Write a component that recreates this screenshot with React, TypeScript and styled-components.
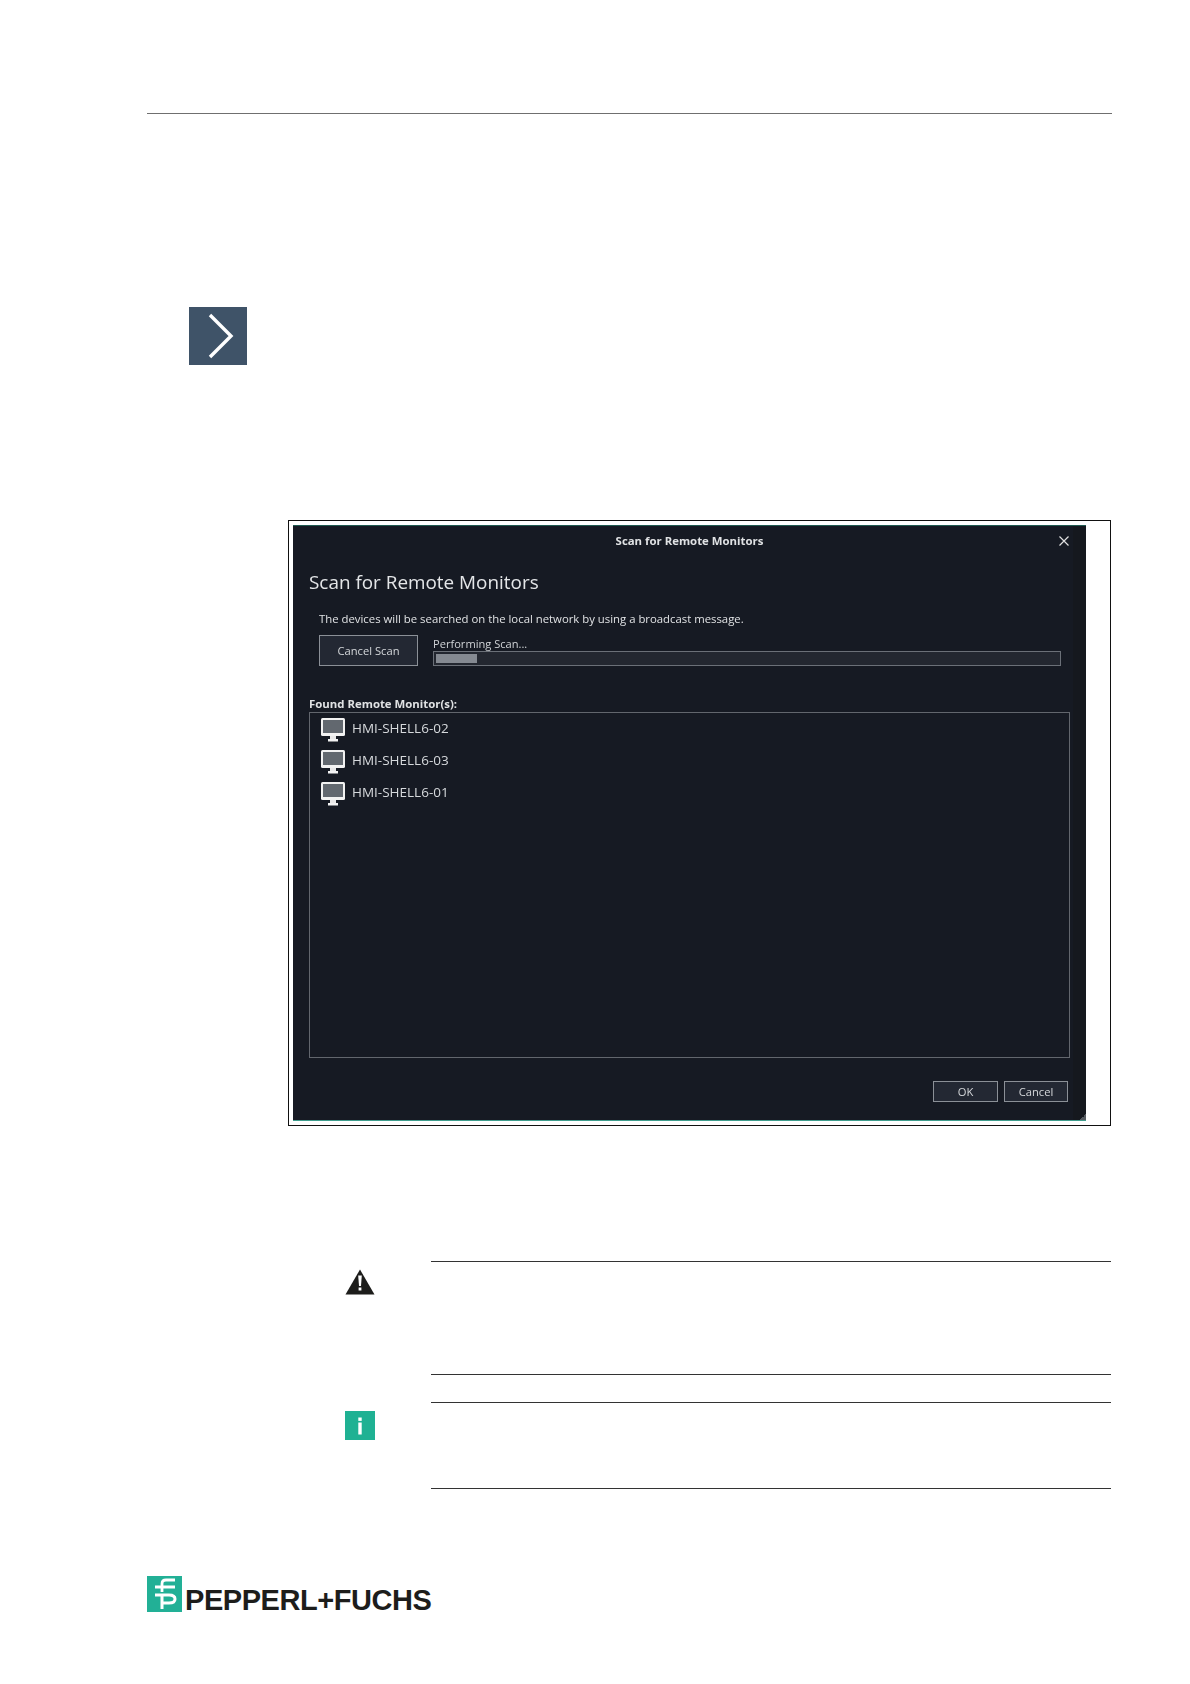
import React from 'react';
import styled, { createGlobalStyle } from 'styled-components';

const GlobalStyle = createGlobalStyle`
	html, body {
		margin: 0;
		padding: 0;
		background: #fff;
	}
`;

const Page = styled('div')`
	width: 1190px;
	height: 1684px;
	box-sizing: border-box;
	padding: 113px 78px 0 147px;
	background: #fff;
	font-family: 'Open Sans', 'Liberation Sans', sans-serif;
`;

const HeaderRule = styled('div')`
	height: 1px;
	background: #6f6f6f;
`;

const ArrowBox = styled('div')`
	width: 58px;
	height: 58px;
	margin: 193px 0 0 42px;
	background: #3f5368;
	display: flex;
`;

const Figure = styled('div')`
	width: 823px;
	height: 606px;
	box-sizing: border-box;
	margin: 155px 0 0 141px;
	padding: 4px 24px 4px 4px;
	border: 1px solid #111;
`;

const Dialog = styled('div')`
	height: 100%;
	display: flex;
	flex-direction: column;
	box-sizing: border-box;
	background: linear-gradient(to right, #161a23 calc(100% - 13px), #15181e 0);
	border-top: 1px solid #1f5a50;
	border-bottom: 1px solid #3f9c8c;
	color: #e4e6e8;
	position: relative;
	filter: blur(0.3px);
`;

const TitleBar = styled('div')`
	height: 29px;
	display: grid;
	grid-template-columns: 1fr auto 1fr;
	align-items: center;
`;

const TitleText = styled('div')`
	font-size: 11.4px;
	font-weight: 700;
	color: #e0e2e4;
`;

const CloseButton = styled('div')`
	justify-self: end;
	margin-right: 17px;
	display: flex;
`;

const Heading = styled('div')`
	margin: 14px 0 0 16px;
	font-size: 18.9px;
	line-height: 27px;
	color: #e4e6e8;
`;

const Description = styled('div')`
	margin: 14px 0 0 26px;
	font-size: 11.35px;
	line-height: 18px;
	color: #e0e2e4;
`;

const ScanRow = styled('div')`
	display: flex;
	margin: 7px 0 0 26px;
	gap: 15px;
`;

const DialogButton = styled('div')<{ $w: number; $h: number }>`
	width: ${(p) => p.$w}px;
	height: ${(p) => p.$h}px;
	box-sizing: border-box;
	display: flex;
	align-items: center;
	justify-content: center;
	border: 1px solid #8b9097;
	background: #232833;
	font-size: 11.2px;
	color: #d4d7da;
`;

const ProgressColumn = styled('div')`
	width: 628px;
	display: flex;
	flex-direction: column;
	justify-content: flex-end;
`;

const ProgressLabel = styled('div')`
	font-size: 11.1px;
	line-height: 14px;
	color: #d0d3d6;
`;

const ProgressTrack = styled('div')`
	height: 15px;
	box-sizing: border-box;
	padding: 2px;
	background: #232730;
	border: 1px solid #6b7078;
`;

const ProgressFill = styled('div')`
	height: 100%;
	width: 41px;
	background: #858a92;
`;

const ListLabel = styled('div')`
	margin: 29px 0 0 16px;
	font-size: 11.4px;
	line-height: 17px;
	font-weight: 700;
	color: #e0e2e4;
`;

const ListBox = styled('div')`
	width: 761px;
	height: 346px;
	box-sizing: border-box;
	margin-left: 16px;
	padding: 5px 0 0 11px;
	border: 1px solid #62666d;
`;

const ListRow = styled('div')`
	height: 32px;
	display: flex;
	align-items: flex-start;
	gap: 7px;
	font-size: 13.5px;
	line-height: 21px;
	color: #d6d9dc;
`;

const Footer = styled('div')`
	display: flex;
	justify-content: flex-end;
	gap: 6px;
	margin: 23px 18px 0 0;
`;

const ResizeGrip = styled('div')`
	position: absolute;
	right: 0;
	bottom: 0;
	width: 6px;
	height: 6px;
	background: linear-gradient(135deg, transparent 50%, #555a60 50%);
`;

const NoticeBlock = styled('div')<{ $h: number; $top: number }>`
	display: flex;
	height: ${(p) => p.$h}px;
	margin-top: ${(p) => p.$top}px;
`;

const NoticeIcon = styled('div')<{ $pt: number }>`
	width: 284px;
	box-sizing: border-box;
	padding: ${(p) => p.$pt}px 0 0 198px;
`;

const NoticeBody = styled('div')`
	flex: 1;
	margin-right: 1px;
	border-top: 1px solid #333;
	border-bottom: 1px solid #333;
`;

const InfoBox = styled('div')`
	width: 30px;
	height: 29px;
	background: #1fb193;
	display: flex;
`;

const Logo = styled('div')`
	display: flex;
	align-items: flex-end;
	margin-top: 87px;
	gap: 3px;
`;

const LogoMark = styled('div')`
	width: 35px;
	height: 36px;
	background: #22b096;
	display: flex;
`;

const LogoText = styled('div')`
	font-family: 'Liberation Sans', Arial, sans-serif;
	font-weight: 700;
	font-size: 29px;
	line-height: 24px;
	letter-spacing: -0.45px;
	color: #1d1d1b;
`;

const Monitor = () => (
	<svg width="24" height="24" viewBox="0 0 24 24">
		<rect x="0" y="0" width="24" height="18" rx="1.5" fill="#f2f2f2" />
		<rect x="2" y="2" width="20" height="13" fill="#62686f" />
		<rect x="9" y="18" width="6" height="3" fill="#e8e8e8" />
		<rect x="7" y="21" width="10" height="2.5" fill="#f2f2f2" />
	</svg>
);

const monitors = ['HMI-SHELL6-02', 'HMI-SHELL6-03', 'HMI-SHELL6-01'];

const App = () => {
	return (
		<Page>
			<GlobalStyle />
			<HeaderRule />
			<ArrowBox>
				<svg width="58" height="58" viewBox="0 0 58 58">
					<path d="M21 8 L42 29 L21 50" fill="none" stroke="#fff" strokeWidth="3.4" />
				</svg>
			</ArrowBox>
			<Figure>
				<Dialog>
					<TitleBar>
						<span />
						<TitleText>Scan for Remote Monitors</TitleText>
						<CloseButton>
							<svg width="10" height="10" viewBox="0 0 10 10">
								<path d="M0.5 0.5 L9.5 9.5 M9.5 0.5 L0.5 9.5" stroke="#e0e0e0" strokeWidth="1.2" />
							</svg>
						</CloseButton>
					</TitleBar>
					<Heading>Scan for Remote Monitors</Heading>
					<Description>The devices will be searched on the local network by using a broadcast message.</Description>
					<ScanRow>
						<DialogButton $w={99} $h={31}>Cancel Scan</DialogButton>
						<ProgressColumn>
							<ProgressLabel>Performing Scan...</ProgressLabel>
							<ProgressTrack>
								<ProgressFill />
							</ProgressTrack>
						</ProgressColumn>
					</ScanRow>
					<ListLabel>Found Remote Monitor(s):</ListLabel>
					<ListBox>
						{monitors.map((name) => (
							<ListRow key={name}>
								<Monitor />
								{name}
							</ListRow>
						))}
					</ListBox>
					<Footer>
						<DialogButton $w={65} $h={21}>OK</DialogButton>
						<DialogButton $w={64} $h={21}>Cancel</DialogButton>
					</Footer>
					<ResizeGrip />
				</Dialog>
			</Figure>
			<NoticeBlock $h={114} $top={135}>
				<NoticeIcon $pt={8}>
					<svg width="30" height="26" viewBox="0 0 30 26">
						<path d="M15 0.5 L29.5 25.5 L0.5 25.5 Z" fill="#1d1d1b" />
						<path d="M13.2 6.5 H16.8 L16 17 H14 Z" fill="#fff" />
						<rect x="13.6" y="18.5" width="2.8" height="3" fill="#fff" />
					</svg>
				</NoticeIcon>
				<NoticeBody />
			</NoticeBlock>
			<NoticeBlock $h={87} $top={27}>
				<NoticeIcon $pt={9}>
					<InfoBox>
						<svg width="30" height="29" viewBox="0 0 30 29">
							<rect x="13.3" y="6.5" width="3.4" height="3.4" fill="#fff" />
							<rect x="13.3" y="11.5" width="3.4" height="12" fill="#fff" />
						</svg>
					</InfoBox>
				</NoticeIcon>
				<NoticeBody />
			</NoticeBlock>
			<Logo>
				<LogoMark>
					<svg width="35" height="36" viewBox="0 0 35 36">
						<path d="M15 16 V8 Q15 4 19 4 H28 M8 11 H28" fill="none" stroke="#fff" strokeWidth="2.8" />
						<path d="M8 19 H22 Q28 19 28 23 Q28 27 22 27 H15 M15 19 V33" fill="none" stroke="#fff" strokeWidth="3" />
					</svg>
				</LogoMark>
				<LogoText>PEPPERL+FUCHS</LogoText>
			</Logo>
		</Page>
	);
};

export default App;
